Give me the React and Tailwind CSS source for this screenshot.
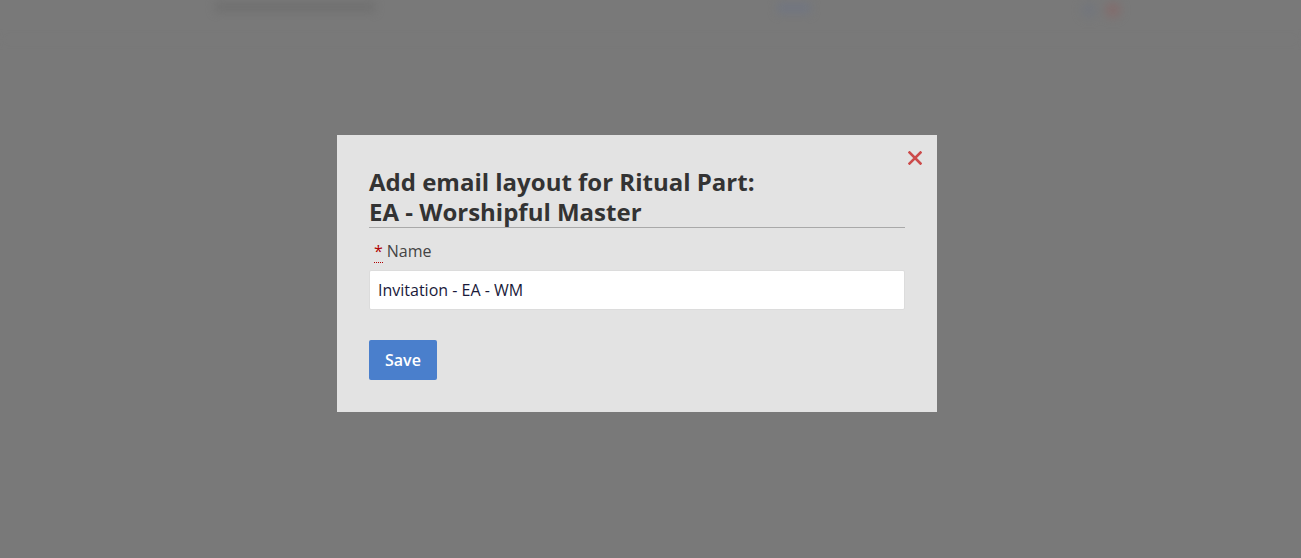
import React, { useState } from "react";

export default function App() {
    const [name, setName] = useState("Invitation - EA - WM");

    return (
        <div className="relative w-full h-[558px] bg-[#797979] overflow-hidden" style={{ fontFamily: '"Open Sans", "Liberation Sans", sans-serif' }}>
            {/* page behind the overlay, washed out */}
            <div className="flex items-start justify-between h-[40px] pl-[215px] pr-[180px] pt-[2px] border-b border-[#7c7c7c] blur-[4px]">
                <div className="w-[160px] h-[10px] rounded bg-[#707070]"></div>
                <div className="flex items-start gap-[270px]">
                    <div className="w-[34px] h-[12px] rounded bg-[#727680]"></div>
                    <div className="flex gap-2">
                        <div className="w-[16px] h-[16px] rounded-full bg-[#73767c]"></div>
                        <div className="w-[16px] h-[16px] rounded-full bg-[#816e6e]"></div>
                    </div>
                </div>
            </div>

            {/* modal */}
            <div className="absolute left-[337px] top-[135px] w-[600px] bg-[#e3e3e3] px-[32px] pt-[32px] pb-[32px]">
                <button className="absolute right-[15px] top-[16px] text-[#cc4b4b] leading-none">
                    <svg width="14" height="14" viewBox="0 0 14 14">
                        <path d="M1.5 1.5 L12.5 12.5 M12.5 1.5 L1.5 12.5" stroke="currentColor" strokeWidth="2.6" strokeLinecap="square" />
                    </svg>
                </button>

                <h2 className="text-[24px] leading-[30px] font-bold text-[#333] border-b border-[#a9a9a9]">
                    Add email layout for Ritual Part:<br />EA - Worshipful Master
                </h2>

                <label className="block mt-[11px] text-[16px] leading-[24px] text-[#444] pl-[5px]">
                    <abbr title="required" className="text-[#b00000] no-underline border-b border-dotted border-[#b00000] mr-[4px]">*</abbr>
                    Name
                </label>
                <input
                    value={name}
                    onChange={(e) => setName(e.target.value)}
                    className="block w-full h-[40px] mt-[7px] bg-white border border-[#dcdcdc] rounded-[2px] px-[8px] text-[16px] text-[#1a1a3a] outline-none"
                />

                <button className="mt-[30px] h-[40px] px-[16px] bg-[#4a7fcc] text-white text-[16px] font-semibold rounded-[2px]">
                    Save
                </button>
            </div>
        </div>
    );
}
